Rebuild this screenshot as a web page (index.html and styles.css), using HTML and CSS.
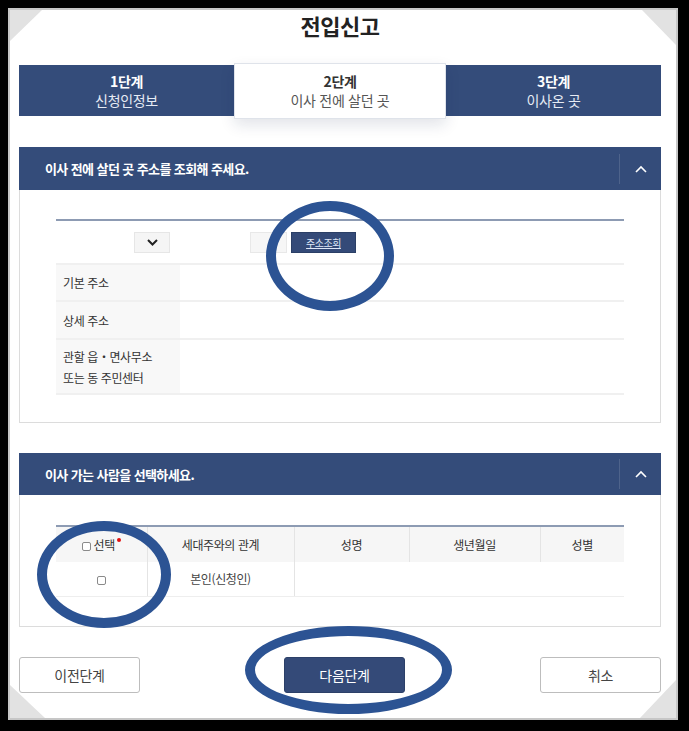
FILE: index.html
```html
<!DOCTYPE html>
<html lang="ko">
<head>
<meta charset="utf-8">
<title>전입신고</title>
<link rel="stylesheet" href="styles.css">
</head>
<body>
<div class="frame">
  <span class="corner tl"></span>
  <span class="corner tr"></span>
  <span class="corner bl"></span>
  <span class="corner br"></span>

  <h1 class="title">전입신고</h1>

  <div class="steps">
    <div class="step"><strong>1단계</strong><span>신청인정보</span></div>
    <div class="step active"><strong>2단계</strong><span>이사 전에 살던 곳</span></div>
    <div class="step"><strong>3단계</strong><span>이사온 곳</span></div>
  </div>

  <section class="card">
    <div class="card-head">
      <h2>이사 전에 살던 곳 주소를 조회해 주세요.</h2>
      <span class="toggle"><svg width="12" height="8" viewBox="0 0 12 8"><polyline points="1,7 6,2 11,7" fill="none" stroke="#fff" stroke-width="1.6"/></svg></span>
    </div>
    <div class="card-body">
      <div class="addr-table">
        <div class="search-row">
          <span class="select"><svg width="11" height="7" viewBox="0 0 11 7"><polyline points="1,1 5.5,5.5 10,1" fill="none" stroke="#222" stroke-width="2"/></svg></span>
          <span class="input"></span>
          <button class="btn-search" type="button">주소조회</button>
        </div>
        <div class="row r1"><div class="label">기본 주소</div><div class="value"></div></div>
        <div class="row r2"><div class="label">상세 주소</div><div class="value"></div></div>
        <div class="row r3"><div class="label">관할 읍・면사무소<br>또는 동 주민센터</div><div class="value"></div></div>
      </div>
    </div>
  </section>

  <section class="card card2">
    <div class="card-head head2">
      <h2>이사 가는 사람을 선택하세요.</h2>
      <span class="toggle"><svg width="12" height="8" viewBox="0 0 12 8"><polyline points="1,7 6,2 11,7" fill="none" stroke="#fff" stroke-width="1.6"/></svg></span>
    </div>
    <div class="card-body body2">
      <table class="people">
        <colgroup><col class="c1"><col class="c2"><col class="c3"><col class="c4"><col class="c5"></colgroup>
        <thead>
          <tr>
            <th><span class="chk"></span> 선택<i class="req"></i></th>
            <th>세대주와의 관계</th>
            <th>성명</th>
            <th>생년월일</th>
            <th>성별</th>
          </tr>
        </thead>
        <tbody>
          <tr>
            <td class="bd"><span class="chk"></span></td>
            <td class="bd">본인(신청인)</td>
            <td></td><td></td><td></td>
          </tr>
        </tbody>
      </table>
    </div>
  </section>

  <div class="actions">
    <button class="btn btn-outline" type="button">이전단계</button>
    <button class="btn btn-primary" type="button">다음단계</button>
    <button class="btn btn-outline btn-cancel" type="button">취소</button>
  </div>

  <span class="mark m1"></span>
  <span class="mark m2"></span>
  <span class="mark m3"></span>
</div>
</body>
</html>
```

FILE: styles.css
```css
* { box-sizing: border-box; }
html, body { margin: 0; }
body {
  background: #000;
  height: 731px;
  overflow: hidden;
  font-family: "Noto Sans CJK KR", "Noto Sans", sans-serif;
  color: #333;
}
.frame {
  position: relative;
  margin: 8px 11px 0 8px;
  height: 712px;
  border: 2px solid #c6c6c6;
  background: #fff;
  padding: 0 15px 0 9px;
}
.corner {
  position: absolute;
  background: #e2e2e2;
}
.corner.tl { left: 0; top: 0; width: 32px; height: 31px; clip-path: polygon(0 0, 100% 0, 0 100%); }
.corner.tr { right: 0; top: 0; width: 34px; height: 35px; clip-path: polygon(0 0, 100% 0, 100% 100%); }
.corner.bl { left: 0; bottom: 0; width: 35px; height: 33px; clip-path: polygon(0 0, 100% 100%, 0 100%); }
.corner.br { right: 0; bottom: 0; width: 36px; height: 38px; clip-path: polygon(100% 0, 100% 100%, 0 100%); }

.title {
  margin: 0;
  font-size: 22px;
  line-height: 30px;
  font-weight: 700;
  text-align: center;
  color: #222;
  letter-spacing: -0.5px;
}

.steps {
  margin-top: 23px;
  display: grid;
  grid-template-columns: 215px 212px 215px;
  height: 56px;
}
.step {
  margin: 2px 0 3px;
  background: #344c7a;
  color: #fff;
  display: flex;
  flex-direction: column;
  align-items: center;
  justify-content: center;
  font-size: 14px;
  line-height: 19px;
  letter-spacing: -0.3px;
}
.step strong { font-weight: 700; }
.step span { color: #e6ebf4; }
.step.active {
  margin: 0;
  background: #fff;
  color: #333;
  border: 1px solid #dfe3ea;
  box-shadow: 0 6px 14px rgba(20, 30, 70, 0.12);
  position: relative;
  z-index: 1;
}
.step.active span { color: #555; }

.card {
  margin-top: 28px;
  border: 1px solid #dcdcdc;
  border-top: none;
}
.card-head {
  margin: 0 -1px;
  height: 43px;
  background: #344c7a;
  display: flex;
  align-items: center;
}
.card-head h2 {
  flex: 1;
  margin: 0;
  padding-left: 26px;
  font-size: 13px;
  font-weight: 700;
  color: #fff;
  letter-spacing: -0.6px;
}
.toggle {
  width: 42px;
  height: 30px;
  border-left: 1px solid rgba(255, 255, 255, 0.13);
  display: flex;
  align-items: center;
  justify-content: center;
}
.card-body {
  padding: 29px 36px 27px;
}
.addr-table {
  border-top: 2px solid #8d9bb3;
  border-bottom: 2px solid #f0f0f0;
}
.search-row {
  display: flex;
  align-items: center;
  padding: 11px 0 10px;
}
.select {
  margin-left: 78px;
  width: 36px;
  height: 21px;
  background: #f5f5f5;
  border: 1px solid #e6e6e6;
  display: flex;
  align-items: center;
  justify-content: center;
}
.input {
  margin-left: 80px;
  width: 37px;
  height: 21px;
  background: #f6f6f6;
  border: 1px solid #e8e8e8;
}
.btn-search {
  margin-left: 4px;
  width: 65px;
  height: 21px;
  padding: 0;
  border: 1px solid #2b3f66;
  background: #344a78;
  color: #dfe7f7;
  font-family: inherit;
  font-size: 10px;
  text-decoration: underline;
  letter-spacing: -0.5px;
}
.row {
  display: grid;
  grid-template-columns: 124px 1fr;
  border-top: 2px solid #f0f0f0;
}
.row.r1 { height: 37px; }
.row.r2 { height: 38px; }
.row.r3 { height: 55px; }
.label {
  background: #f8f8f8;
  padding-left: 7px;
  display: flex;
  align-items: center;
  font-size: 12px;
  line-height: 21px;
  color: #333;
  letter-spacing: -0.4px;
}

.card2 { margin-top: 30px; }
.head2 { height: 42px; }
.body2 { padding: 30px 36px 29px; }
.people {
  width: 100%;
  border-collapse: collapse;
  table-layout: fixed;
  border-top: 2px solid #8d9bb3;
  font-size: 12px;
  letter-spacing: -0.4px;
}
.c1 { width: 91px; }
.c2 { width: 147px; }
.c3 { width: 115px; }
.c4 { width: 131px; }
.c5 { width: 84px; }
.people th {
  height: 36px;
  background: #f6f6f6;
  font-weight: 400;
  color: #333;
  border-right: 1px solid #e4e4e4;
  padding: 0;
  text-align: center;
}
.people th:last-child { border-right: none; }
.people td {
  height: 34px;
  padding: 0;
  text-align: center;
  color: #444;
  border-bottom: 1px solid #eeeeee;
}
.people td.bd { border-right: 1px solid #e4e4e4; }
.chk {
  display: inline-block;
  width: 9px;
  height: 9px;
  border: 1px solid #8a8a8a;
  border-radius: 2px;
  background: #fff;
  vertical-align: -1px;
}
.req {
  display: inline-block;
  width: 4px;
  height: 4px;
  border-radius: 50%;
  background: #e01010;
  margin-left: 2px;
  vertical-align: 8px;
}

.actions {
  margin-top: 30px;
  display: flex;
}
.btn {
  width: 121px;
  height: 36px;
  border-radius: 3px;
  font-family: inherit;
  font-size: 14px;
  letter-spacing: -0.3px;
  padding: 0;
}
.btn-outline {
  background: #fff;
  border: 1px solid #bdbdbd;
  color: #444;
}
.btn-primary {
  margin-left: 144px;
  background: #344a78;
  border: 1px solid #2c4068;
  color: #fff;
}
.btn-cancel { margin-left: auto; }

.mark {
  position: absolute;
  border: 10px solid #2c5393;
  border-radius: 50%;
  z-index: 2;
}
.m1 { left: 256px; top: 191px; width: 128px; height: 110px; }
.m2 { left: 27px; top: 511px; width: 134px; height: 107px; }
.m3 { left: 235px; top: 616px; width: 207px; height: 88px; }
```
